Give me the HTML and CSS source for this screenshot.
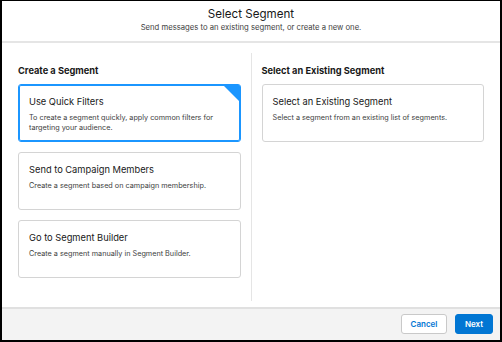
FILE: index.html
```html
<!DOCTYPE html>
<html>
<head>
<meta charset="utf-8">
<link rel="stylesheet" href="styles.css">
</head>
<body>
<div class="modal">
  <header class="head">
    <h1 class="title">Select Segment</h1>
    <p class="subtitle">Send messages to an existing segment, or create a new one.</p>
  </header>
  <main class="content">
    <section class="col">
      <h2 class="col-title">Create a Segment</h2>
      <div class="card selected">
        <span class="corner"></span>
        <div class="card-title">Use Quick Filters</div>
        <div class="card-desc">To create a segment quickly, apply common filters for targeting your audience.</div>
      </div>
      <div class="card">
        <div class="card-title">Send to Campaign Members</div>
        <div class="card-desc">Create a segment based on campaign membership.</div>
      </div>
      <div class="card">
        <div class="card-title">Go to Segment Builder</div>
        <div class="card-desc">Create a segment manually in Segment Builder.</div>
      </div>
    </section>
    <div class="divider"></div>
    <section class="col">
      <h2 class="col-title">Select an Existing Segment</h2>
      <div class="card">
        <div class="card-title">Select an Existing Segment</div>
        <div class="card-desc">Select a segment from an existing list of segments.</div>
      </div>
    </section>
  </main>
  <footer class="foot">
    <button class="btn btn-neutral">Cancel</button>
    <button class="btn btn-brand">Next</button>
  </footer>
</div>
</body>
</html>
```
FILE: styles.css
```css
* { box-sizing: border-box; }
html, body { margin: 0; padding: 0; }
body {
  width: 502px;
  height: 342px;
  font-family: "Inter", "Liberation Sans", sans-serif;
  color: #181818;
  background: #fff;
}
.modal {
  width: 502px;
  height: 342px;
  border: 2px solid #000;
  border-top-width: 1px;
  display: flex;
  flex-direction: column;
}
.head {
  height: 42px;
  border-bottom: 2px solid #e5e5e5;
  text-align: center;
  padding-top: 6px;
}
.title {
  margin: 0;
  font-size: 11.6px;
  font-weight: 400;
  line-height: 14px;
  color: #181818;
}
.subtitle {
  margin: 2px 0 0;
  font-size: 7.7px;
  line-height: 10px;
  color: #3e3e3e;
}
.content {
  flex: 1;
  display: flex;
  padding: 10px 16px 6px;
}
.col {
  flex: 1;
  padding-top: 12px;
}
.divider {
  width: 1px;
  background: #e5e5e5;
  margin: 0 10px;
}
.col-title {
  margin: 0 0 7px;
  font-size: 9.25px;
  font-weight: 700;
  line-height: 12px;
  color: #181818;
}
.card {
  position: relative;
  height: 58px;
  border: 1px solid #d4d4d4;
  border-radius: 3px;
  padding: 10px 10px 0;
  margin-bottom: 10px;
  overflow: hidden;
}
.card.selected {
  border: 1px solid #1b96ff;
  box-shadow: inset 0 0 0 1px #1b96ff;
}
.corner {
  position: absolute;
  top: 0;
  right: 0;
  width: 0;
  height: 0;
  border-top: 17px solid #1b96ff;
  border-left: 17px solid transparent;
}
.card-title {
  font-size: 9.3px;
  line-height: 13px;
  color: #181818;
  margin-bottom: 5px;
}
.card-desc {
  font-size: 7.25px;
  line-height: 9.5px;
  color: #3e3e3e;
}
.foot {
  height: 33px;
  border-top: 2px solid #e0e0e0;
  background: #f3f3f3;
  display: flex;
  justify-content: flex-end;
  align-items: center;
  gap: 8px;
  padding: 0 7px 2px;
}
.btn {
  height: 20px;
  border-radius: 3px;
  font-family: inherit;
  font-size: 8px;
  font-weight: 600;
  padding: 0;
  line-height: 18px;
}
.btn-neutral {
  width: 46px;
  background: #fff;
  border: 1px solid #c9c9c9;
  color: #0176d3;
}
.btn-brand {
  width: 38px;
  background: #0176d3;
  border: 1px solid #0176d3;
  color: #fff;
}
```
